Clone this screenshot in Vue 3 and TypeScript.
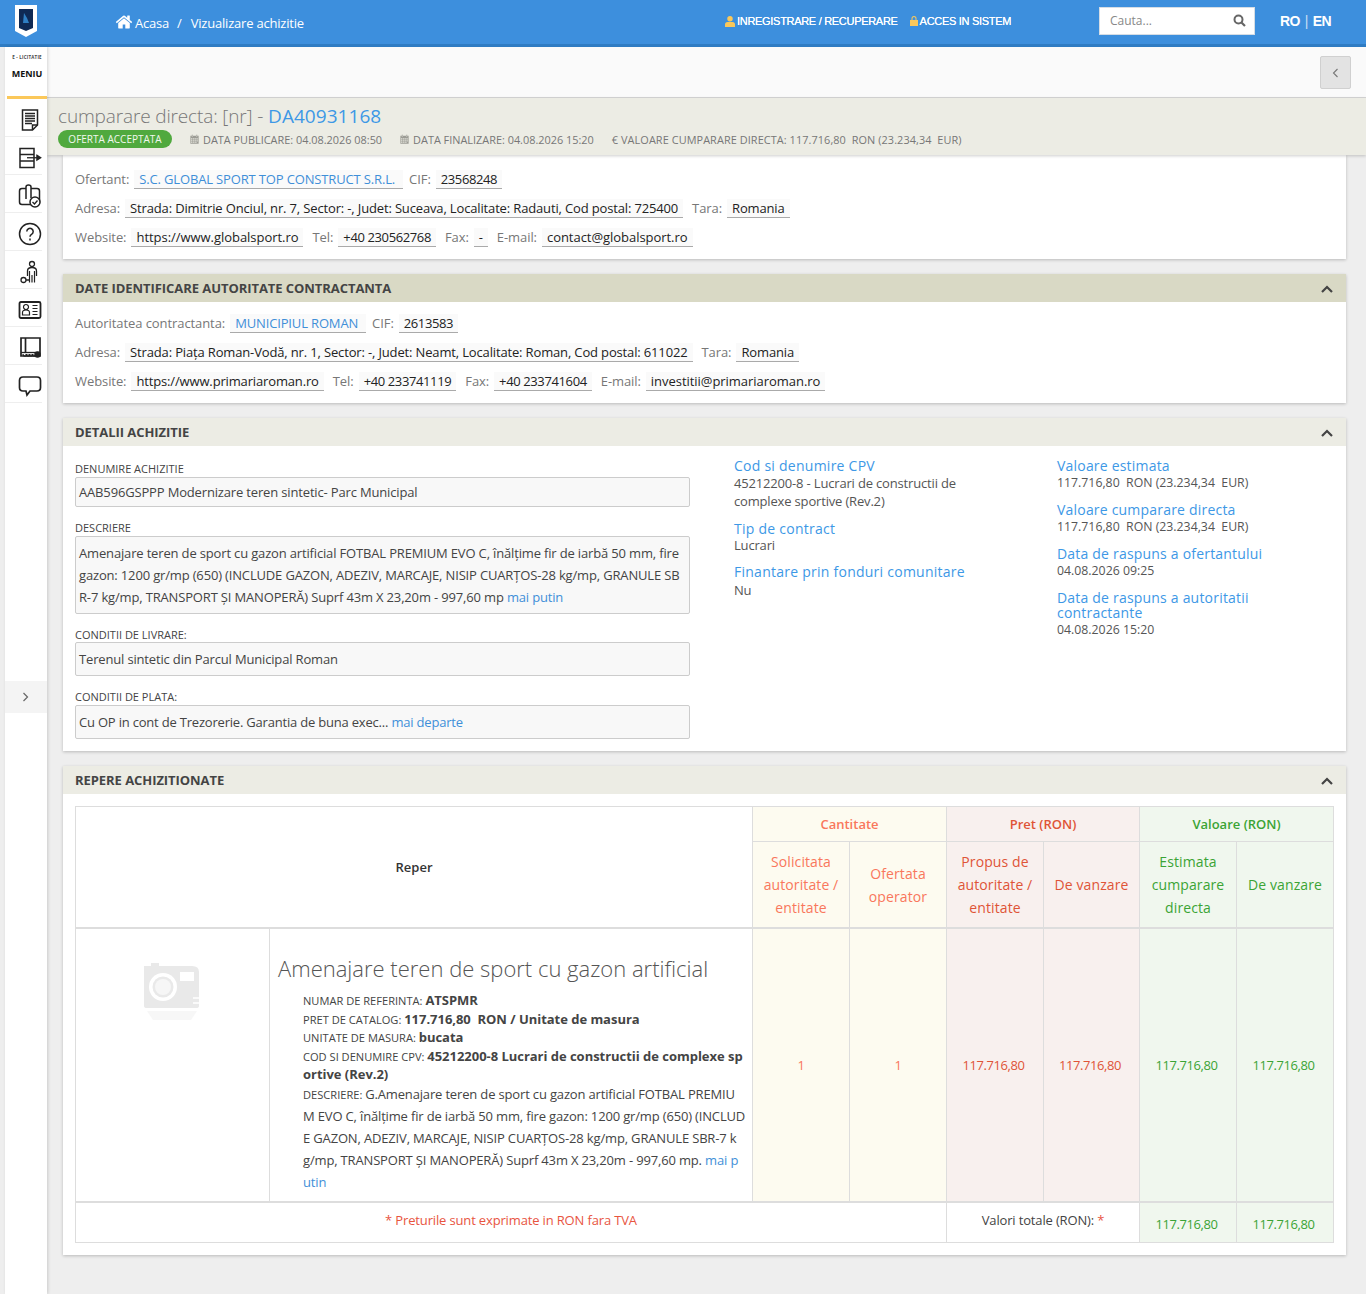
<script setup lang="ts">
interface Seg { d: string; fill?: string; w?: number }

const calendar = 'M2 2.500h12V14H2zM3 6v2h2V6zM6 6v2h2V6zM9 6v2h2V6zM12 6v2h1V6zM3 9v2h2V9zM6 9v2h2V9zM9 9v2h2V9zM12 9v2h1V9zM3 12v1h2v-1zM6 12v1h2v-1zM9 12v1h2v-1zM4 1h1.500v2.500H4zM10.500 1H12v2.500h-1.500z'
const home = 'M1472 992v480q0 26-19 45t-45 19h-384v-384h-256v384h-384q-26 0-45-19t-19-45v-480q0-1 .5-3t.5-3l575-474 575 474q1 2 1 6zm223-69l-62 74q-8 9-21 11h-3q-13 0-21-7l-692-577-692 577q-12 8-24 7-13-2-21-11l-62-74q-8-10-7-23.500t11-21.500l719-599q32-26 76-26t76 26l244 204v-195q0-14 9-23t23-9h192q14 0 23 9t9 23v408l219 182q10 8 11 21.500t-7 23.500z'
const navIcons: Seg[][] = [
  [
    { d: 'M4.500 2H19.500V17L14.500 22H4.500Z' },
    { d: 'M7 5.500h10M7 8h10M7 10.500h10M7 13h10M7 15.500h7', w: 1.3 },
    { d: 'M14.500 22v-5h5' }
  ],
  [
    { d: 'M2 2.500h14v6H2zM2 8.500h14V15H2zM2 15h14v6.500H2z' },
    { d: 'M9 11.750h10', w: 1.300 },
    { d: 'M19 9.500l3.500 2.250-3.500 2.250z', fill: '#222' }
  ],
  [
    { d: 'M4 4.500h15q2.500 0 2.500 2.500v11q0 2.500-2.500 2.500H4q-2.500 0-2.500-2.500V7Q1.500 4.500 4 4.500z' },
    { d: 'M8 15V3q0-2 2.500-2t2.500 2v11', fill: '#fff' },
    { d: 'M12 18a5 5 0 1 0 10 0a5 5 0 1 0-10 0', fill: '#fff' },
    { d: 'M14.500 18l2 2 3-3.500', w: 1.300 }
  ],
  [
    { d: 'M1.500 12a10.500 10.500 0 1 0 21 0a10.500 10.500 0 1 0-21 0' },
    { d: 'M8.800 9.500a3.200 3.200 0 1 1 4.800 2.800c-1 .6-1.600 1.200-1.600 2.400M12 16.500v2' }
  ],
  [
    { d: 'M14 1.500a2.500 2.500 0 1 1 0 5a2.500 2.500 0 1 1 0-5z', w: 1.300 },
    { d: 'M9.500 16V11q0-3.500 4.500-3.500t4.500 3.500v5', w: 1.300 },
    { d: 'M11.500 11v11.500M16.500 11v11.500M14 15v7.500', w: 1.200 },
    { d: 'M3 20a2.500 2.500 0 1 0 5 0a2.500 2.500 0 1 0-5 0M8 20h3', w: 1.300 }
  ],
  [
    { d: 'M3 4h18q1.500 0 1.500 1.500v13q0 1.500-1.500 1.500H3q-1.500 0-1.500-1.500v-13Q1.500 4 3 4z', w: 1.800 },
    { d: 'M4.500 17v-2.500q0-2.500 3.500-2.500t3.500 2.500V17zM8 6.500a2.500 2.500 0 1 1 0 5a2.500 2.500 0 1 1 0-5zM14.500 7.500h5M14.500 10.500h5M14.500 13.500h5M14.500 16.500h5', w: 1.200 }
  ],
  [
    { d: 'M3 2h19v18H3zM7.500 2v14', w: 1.700 },
    { d: 'M3 16.500h19', w: 1.300 },
    { d: 'M5 18a2 2.200 0 1 0 4 0M8 18a2 2.200 0 1 0 4 0M11 18a2 2.200 0 1 0 4 0M14 18a2 2.200 0 1 0 4 0', w: 1.200 },
    { d: 'M17 18.500a2.500 2.500 0 1 0 5 0a2.500 2.500 0 1 0-5 0', fill: '#222' }
  ],
  [
    { d: 'M5 3h14q3.500 0 3.500 3.500v7q0 3.500-3.500 3.500h-7l-3 4-1-4H5q-3.500 0-3.500-3.500v-7Q1.500 3 5 3z', w: 1.700 }
  ]
]
</script>

<template>
  <div class="page">
    <header class="topbar">
      <div class="logo">
        <svg width="22" height="32" viewBox="0 0 22 32">
          <path d="M0 0h22v26l-11 6L0 26z" fill="#fff" />
          <path d="M4 4h14v19l-7 3-7-3z" fill="#0f2a55" />
          <path d="M9 8l3 5 2 5H8z" fill="#2f7fc4" />
        </svg>
      </div>
      <nav class="crumbs">
        <svg class="home" width="18" height="18" viewBox="0 0 1792 1792"><path :d="home" fill="#fff" /></svg>
        <span>Acasa</span><span class="sep">/</span><span>Vizualizare achizitie</span>
      </nav>
      <div class="auth">
        <svg width="10" height="11" viewBox="0 0 10 11"><path d="M5 0a2.600 2.600 0 0 1 0 5.500A2.600 2.600 0 0 1 5 0zM0 11V8.500Q0 6 2.500 6h5Q10 6 10 8.500V11z" fill="#fbc85a" /></svg>
        <span class="auth-t">INREGISTRARE / RECUPERARE</span>
        <svg class="lock" width="8" height="10" viewBox="0 0 8 10"><path d="M0 4h8v6H0zM1.500 4V2.500a2.500 2.500 0 0 1 5 0V4h-1V2.500a1.500 1.500 0 0 0-3 0V4z" fill="#fbc85a" /></svg>
        <span class="auth-t">ACCES IN SISTEM</span>
      </div>
      <div class="search">
        <span>Cauta...</span>
        <svg width="13" height="13" viewBox="0 0 13 13"><circle cx="5.500" cy="5.500" r="4" fill="none" stroke="#666" stroke-width="2" /><path d="M8.500 8.500L12 12" stroke="#666" stroke-width="2.200" /></svg>
      </div>
      <div class="lang"><b>RO</b><i>|</i><b>EN</b></div>
    </header>

    <div class="shell">
      <aside class="side">
        <div class="brand">
          <div class="brand-s">E - LICITATIE</div>
          <div class="brand-m">MENIU</div>
        </div>
        <div v-for="(segs, i) in navIcons" :key="i" class="nav-item">
          <svg width="24" height="24" viewBox="0 0 24 24">
            <path v-for="(s, j) in segs" :key="j" :d="s.d" :fill="s.fill || 'none'" stroke="#222" :stroke-width="s.w || 1.500" />
          </svg>
        </div>
        <div class="side-toggle">
          <svg width="7" height="10" viewBox="0 0 7 10"><path d="M1.500 1l4 4-4 4" fill="none" stroke="#666" stroke-width="1.200" /></svg>
        </div>
      </aside>

      <main class="main">
        <div class="toolbar">
          <button class="back" type="button">
            <svg width="7" height="10" viewBox="0 0 7 10"><path d="M5.500 1l-4 4 4 4" fill="none" stroke="#777" stroke-width="1.100" /></svg>
          </button>
        </div>
        <div class="band">
          <h1><span class="h1t">cumparare directa: [nr] - </span><a>DA40931168</a></h1>
          <div class="meta">
            <span class="badge">OFERTA ACCEPTATA</span>
            <span class="m m1"><svg width="11" height="11" viewBox="0 0 16 16"><path :d="calendar" fill="#9c9c95" fill-rule="evenodd" /></svg>DATA PUBLICARE: 04.08.2026 08:50</span>
            <span class="m m2"><svg width="11" height="11" viewBox="0 0 16 16"><path :d="calendar" fill="#9c9c95" fill-rule="evenodd" /></svg>DATA FINALIZARE: 04.08.2026 15:20</span>
            <span class="m m3">€ VALOARE CUMPARARE DIRECTA: 117.716,80&nbsp; RON (23.234,34&nbsp; EUR)</span>
          </div>
        </div>

        <div class="content">
          <section class="card first">
            <div class="fields">
              <div class="row"><label>Ofertant:</label><span class="val link">S.C. GLOBAL SPORT TOP CONSTRUCT S.R.L.</span><label>CIF:</label><span class="val dig">23568248</span></div>
              <div class="row"><label>Adresa:</label><span class="val">Strada: Dimitrie Onciul, nr. 7, Sector: -, Judet: Suceava, Localitate: Radauti, Cod postal: 725400</span><label>Tara:</label><span class="val">Romania</span></div>
              <div class="row"><label>Website:</label><span class="val web">https://www.globalsport.ro</span><label>Tel:</label><span class="val dig">+40 230562768</span><label>Fax:</label><span class="val">-</span><label>E-mail:</label><span class="val web">contact@globalsport.ro</span></div>
            </div>
          </section>

          <section class="card">
            <div class="chead dark"><h2>DATE IDENTIFICARE AUTORITATE CONTRACTANTA</h2><svg width="14" height="9" viewBox="0 0 14 9"><path d="M2 7l5-5 5 5" fill="none" stroke="#444" stroke-width="2.200" /></svg></div>
            <div class="fields">
              <div class="row"><label>Autoritatea contractanta:</label><span class="val link">MUNICIPIUL ROMAN</span><label>CIF:</label><span class="val dig">2613583</span></div>
              <div class="row"><label>Adresa:</label><span class="val">Strada: Piața Roman-Vodă, nr. 1, Sector: -, Judet: Neamt, Localitate: Roman, Cod postal: 611022</span><label>Tara:</label><span class="val">Romania</span></div>
              <div class="row"><label>Website:</label><span class="val">https://www.primariaroman.ro</span><label>Tel:</label><span class="val dig">+40 233741119</span><label>Fax:</label><span class="val dig">+40 233741604</span><label>E-mail:</label><span class="val web">investitii@primariaroman.ro</span></div>
            </div>
          </section>

          <section class="card">
            <div class="chead"><h2>DETALII ACHIZITIE</h2><svg width="14" height="9" viewBox="0 0 14 9"><path d="M2 7l5-5 5 5" fill="none" stroke="#444" stroke-width="2.200" /></svg></div>
            <div class="details">
              <div class="col-a">
                <div class="lbl">DENUMIRE ACHIZITIE</div>
                <div class="box">AAB596GSPPP Modernizare teren sintetic- Parc Municipal</div>
                <div class="lbl">DESCRIERE</div>
                <div class="box long">Amenajare teren de sport cu gazon artificial FOTBAL PREMIUM EVO C, înălțime fir de iarbă 50 mm, fire gazon: 1200 gr/mp (650) (INCLUDE GAZON, ADEZIV, MARCAJE, NISIP CUARȚOS-28 kg/mp, GRANULE SBR-7 kg/mp, TRANSPORT ȘI MANOPERĂ) Suprf 43m X 23,20m - 997,60 mp <a>mai putin</a></div>
                <div class="lbl l3">CONDITII DE LIVRARE:</div>
                <div class="box tall">Terenul sintetic din Parcul Municipal Roman</div>
                <div class="lbl">CONDITII DE PLATA:</div>
                <div class="box tall pay">Cu OP in cont de Trezorerie. Garantia de buna exec... <a>mai departe</a></div>
              </div>
              <div class="col-b">
                <h3>Cod si denumire CPV</h3>
                <p class="p-first">45212200-8 - Lucrari de constructii de complexe sportive (Rev.2)</p>
                <h3>Tip de contract</h3>
                <p>Lucrari</p>
                <h3 class="h-last">Finantare prin fonduri comunitare</h3>
                <p>Nu</p>
              </div>
              <div class="col-c">
                <h3>Valoare estimata</h3>
                <p>117.716,80&nbsp; RON (23.234,34&nbsp; EUR)</p>
                <h3>Valoare cumparare directa</h3>
                <p>117.716,80&nbsp; RON (23.234,34&nbsp; EUR)</p>
                <h3>Data de raspuns a ofertantului</h3>
                <p>04.08.2026 09:25</p>
                <h3>Data de raspuns a autoritatii contractante</h3>
                <p>04.08.2026 15:20</p>
              </div>
            </div>
          </section>

          <section class="card last">
            <div class="chead"><h2>REPERE ACHIZITIONATE</h2><svg width="14" height="9" viewBox="0 0 14 9"><path d="M2 7l5-5 5 5" fill="none" stroke="#444" stroke-width="2.200" /></svg></div>
            <div class="tablewrap">
              <table>
                <colgroup>
                  <col class="c-img" /><col class="c-info" /><col class="c-n" /><col class="c-n" /><col class="c-n" /><col class="c-m" /><col class="c-n" /><col class="c-n" />
                </colgroup>
                <thead>
                  <tr class="r1">
                    <th colspan="2" rowspan="2" class="reper">Reper</th>
                    <th colspan="2" class="y">Cantitate</th>
                    <th colspan="2" class="p">Pret (RON)</th>
                    <th colspan="2" class="g">Valoare (RON)</th>
                  </tr>
                  <tr class="r2">
                    <td class="y">Solicitata autoritate / entitate</td>
                    <td class="y">Ofertata operator</td>
                    <td class="p">Propus de autoritate / entitate</td>
                    <td class="p">De vanzare</td>
                    <td class="g">Estimata cumparare directa</td>
                    <td class="g">De vanzare</td>
                  </tr>
                </thead>
                <tbody>
                  <tr class="body">
                    <td class="img">
                      <svg width="58" height="62" viewBox="0 0 58 62">
                        <path d="M1 6h7V3h8v3h33q7 0 7 6v34q0 2-3 2H4q-3 0-3-2z" fill="#e9e9e9" />
                        <circle cx="20" cy="27" r="14" fill="#fff" />
                        <circle cx="20" cy="27" r="10.500" fill="#e9e9e9" />
                        <circle cx="20" cy="27" r="8" fill="#f6f6f6" />
                        <rect x="37" y="12" width="14" height="9" fill="#fff" />
                        <path d="M50 38h7M50 43h7" stroke="#fff" stroke-width="1.500" />
                        <path d="M4 51h50l-6 9H10z" fill="#f7f7f7" />
                      </svg>
                    </td>
                    <td class="info">
                      <h4>Amenajare teren de sport cu gazon artificial</h4>
                      <div class="spec">
                        <div><small>NUMAR DE REFERINTA: </small><b>ATSPMR</b></div>
                        <div><small>PRET DE CATALOG: </small><b>117.716,80&nbsp; RON / Unitate de masura</b></div>
                        <div><small>UNITATE DE MASURA: </small><b>bucata</b></div>
                        <div class="brk"><small>COD SI DENUMIRE CPV: </small><b>45212200-8 Lucrari de constructii de complexe sportive (Rev.2)</b></div>
                        <div class="desc"><small>DESCRIERE: </small>G.Amenajare teren de sport cu gazon artificial FOTBAL PREMIU<br />M EVO C, înălțime fir de iarbă 50 mm, fire gazon: 1200 gr/mp (650) (INCLUD<br />E GAZON, ADEZIV, MARCAJE, NISIP CUARȚOS-28 kg/mp, GRANULE SBR-7 k<br />g/mp, TRANSPORT ȘI MANOPERĂ) Suprf 43m X 23,20m - 997,60 mp. <a>mai p<br />utin</a></div>
                      </div>
                    </td>
                    <td class="y num">1</td>
                    <td class="y num">1</td>
                    <td class="p num money">117.716,80</td>
                    <td class="p num money">117.716,80</td>
                    <td class="g num money">117.716,80</td>
                    <td class="g num money">117.716,80</td>
                  </tr>
                </tbody>
                <tfoot>
                  <tr class="foot">
                    <td colspan="4" class="note">* Preturile sunt exprimate in RON fara TVA</td>
                    <td colspan="2" class="tot">Valori totale (RON): <em>*</em></td>
                    <td class="g sum money">117.716,80</td>
                    <td class="g sum money">117.716,80</td>
                  </tr>
                </tfoot>
              </table>
            </div>
          </section>
        </div>
      </main>
    </div>
  </div>
</template>

<style>
html, body { margin: 0; background: #eee; }
</style>

<style scoped>
.page { font-family: "Open Sans", sans-serif; font-size: 13px; color: #444; background: #eee; height: 1294px; overflow: hidden; }
a { color: #3f8fd8; }

.topbar { height: 44px; padding-top: 0; background: #3d8fdd; border-bottom: 3px solid #2f7cc3; display: flex; align-items: center; color: #fff; }
.logo { margin-left: 15px; width: 22px; height: 32px; margin-top: -3px; }
.crumbs { margin-left: 78px; width: 610px; display: flex; align-items: center; font-size: 13px; margin-top: 2px; letter-spacing: -.2px; }
.home { margin-right: 2px; margin-top: -2px; }
.sep { margin: 0 9px 0 8px; }
.auth { width: 374px; display: flex; align-items: center; margin-top: -2px; font-family: "Liberation Sans", sans-serif; font-size: 11px; letter-spacing: -0.3px; text-shadow: 0 0 .4px #fff; }
.auth-t { margin-left: 2px; }
.lock { margin-left: 12px; }
.search { width: 154px; height: 26px; background: #fff; border: 1px solid #d5dde5; display: flex; align-items: center; justify-content: space-between; box-sizing: content-box; color: #888; font-size: 12px; margin-top: -3px; }
.search span { margin-left: 10px; }
.search svg { margin-right: 8px; }
.lang { margin-left: 25px; margin-top: -3px; font-family: "Liberation Sans", sans-serif; font-size: 14px; display: flex; gap: 5px; letter-spacing: -0.6px; }
.lang i { font-style: normal; opacity: .7; }

.shell { display: flex; align-items: stretch; height: 1247px; }
.side { width: 42px; margin-left: 5px; background: #fff; box-shadow: 1px 0 3px rgba(0,0,0,.15); position: relative; z-index: 2; flex: none; }
.brand { padding-bottom: 1px; margin-left: 2px; border-bottom: 3px solid #fbc85a; text-align: center; color: #111; box-sizing: content-box; height: 48px; }
.brand-s { font-size: 4.500px; font-weight: 700; padding-top: 7px; line-height: 6px; color: #444; letter-spacing: .2px; }
.brand-m { font-size: 9px; font-weight: 700; line-height: 12px; margin-top: 8px; }
.nav-item { height: 37px; border-bottom: 1px solid #eee; display: flex; align-items: center; justify-content: center; margin-right: 5px; padding-left: 12px; padding-top: 0; box-sizing: content-box; }
.nav-item svg { position: relative; top: 2px; }
.side-toggle { margin-top: 278px; height: 32px; background: #f4f4f4; display: flex; align-items: center; justify-content: center; padding-right: 1px; }

.main { flex: 1; min-width: 0; }
.toolbar { height: 50px; background: #fafafa; border-bottom: 1px solid #d6d6d6; display: flex; align-items: center; justify-content: flex-end; padding-right: 15px; box-shadow: 0 1px 2px rgba(0,0,0,.1); position: relative; }
.back { width: 31px; height: 33px; background: #e3e3e3; border: 1px solid #d0d0d0; border-radius: 2px; display: flex; align-items: center; justify-content: center; padding: 0; margin-top: 1px; }
.band { height: 57px; background: #ecece4; padding-left: 11px; box-sizing: border-box; box-shadow: 0 1px 3px rgba(0,0,0,.2); position: relative; z-index: 1; }
h1 { margin: 0; font-size: 19px; font-weight: 300; line-height: 27px; padding-top: 5px; color: #777; }
.h1t { letter-spacing: -.14px; }
h1 a { color: #3d98e6; font-weight: 400; letter-spacing: .05px; }
.meta { display: flex; align-items: center; height: 18px; margin-top: 0; font-size: 10.900px; color: #777; }
.badge { width: 114px; height: 18px; border-radius: 9px; background: #50a93e; color: #f2f8ee; font-size: 10px; line-height: 18px; text-align: center; flex: none; }
.m { white-space: nowrap; }
.m svg { margin-right: 3px; vertical-align: -1px; }
.m1 { margin-left: 17px; }
.m2 { margin-left: 17px; }
.m3 { margin-left: 18px; letter-spacing: .08px; }

.content { padding: 0 20px 0 16px; }
.card { background: #fff; box-shadow: 0 1px 3px rgba(0,0,0,.22); margin-bottom: 15px; }
.first { height: 104px; }
.chead { height: 28px; background: #ecece4; display: flex; align-items: center; justify-content: space-between; padding: 0 12px; }
.chead.dark { background: #d9d9c5; }
.chead svg { margin-top: 3px; }
h2 { margin: 0; font-size: 13px; font-weight: 700; color: #444; letter-spacing: -.06px; }
.fields { padding: 12px 12px 0; height: 89px; box-sizing: content-box; }
.first .fields { padding-top: 15px; height: auto; }
.row { display: flex; align-items: baseline; height: 19px; margin-bottom: 10px; white-space: nowrap; }
.row label { color: #777; margin-right: 5px; letter-spacing: -.08px; }
.val { background: #fafafa; border-bottom: 1px solid #aaa; padding: 0 5px; line-height: 18px; color: #222; margin-right: 9px; letter-spacing: -.15px; }
.val.web { letter-spacing: -.04px; }
.val.dig { letter-spacing: -.38px; }
.val.link { color: #3f8fd8; padding: 0 8px 0 5px; margin-right: 6px; }

.details { display: flex; padding: 10px 12px 12px; height: 283px; }
.col-a { width: 615px; flex: none; }
.lbl { font-size: 11px; line-height: 16px; color: #444; margin-top: 13px; }
.lbl.l3 { line-height: 15px; }
.col-a .lbl:first-child { margin-top: 5px; }
.box { background: #f8f8f8; border: 1px solid #ccc; border-radius: 2px; padding: 0 3px; line-height: 28px; height: 28px; color: #444; overflow: hidden; letter-spacing: -.16px; }
.box.long { word-break: break-all; line-height: 22px; height: auto; padding: 5px 3px 5px; }
.box.tall { height: 32px; line-height: 32px; }
.box.pay { letter-spacing: -.2px; }
.col-b { margin-left: 44px; width: 283px; flex: none; }
.col-c { margin-left: 40px; width: 270px; flex: none; }
h3 { margin: 0; font-size: 14px; line-height: 15px; font-weight: 400; color: #3d98e6; letter-spacing: .25px; }
.col-b h3, .col-c h3 { padding-top: 2px; }
.col-c h3 { letter-spacing: .2px; }
.col-b p { margin: 0 0 9px; max-width: 260px; font-size: 13px; line-height: 18px; color: #555; letter-spacing: -.17px; }
.col-b .p-first { margin-top: 1px; }
.col-b .h-last { margin: -1px 0 2px; }
.col-c p { margin: 2px 0 9px; font-size: 12.300px; line-height: 16px; color: #555; }

.last { margin-bottom: 0; height: 489px; }
.tablewrap { padding: 12px 12px 0; }
table { border-collapse: collapse; table-layout: fixed; width: 1258px; }
.c-img { width: 194px; }
.c-info { width: 483px; }
.c-n { width: 97px; }
.c-m { width: 96px; }
th, td { border: 1px solid #ddd; padding: 0; text-align: center; vertical-align: middle; font-weight: 400; }
th { font-weight: 600; font-size: 13px; }
.r1 th { height: 34px; }
.reper { color: #333; }
.r2 td { height: 85px; padding: 0 6px; font-size: 14px; line-height: 23px; letter-spacing: .1px; }
thead { border-bottom: 2px solid #ddd; }
tfoot { border-top: 2px solid #ddd; }
.y { background: #fdfbf0; color: #f9775c; }
.p { background: #f8f0ee; color: #df5437; }
.g { background: #f0f7ee; color: #3ba435; }
.body { height: 274px; }
.img { vertical-align: top; padding: 31px 1px 0 0; }
.info { text-align: left; vertical-align: top; padding: 24px 3px 0 8px; }
h4 { margin: 0; font-size: 22px; font-weight: 300; line-height: 30px; color: #555; }
.spec { margin: 8px 0 0 25px; color: #444; line-height: 18.500px; }
.spec small { font-size: 11.100px; line-height: 1; }
.spec b { font-weight: 700; letter-spacing: -.03px; }
.brk { word-break: break-all; padding-right: 3px; }
.desc { line-height: 22px; letter-spacing: -.16px; margin-top: -1px; }
.desc small { letter-spacing: 0; }
.num { font-size: 13px; letter-spacing: -.4px; }
.money { padding-right: 3px; }
.foot { height: 40px; }
.note { color: #e8553f; padding-bottom: 4px; letter-spacing: -.15px; }
.tot { color: #444; padding-bottom: 4px; letter-spacing: -.15px; }
.tot em { font-style: normal; color: #e8553f; }
.sum { padding-top: 3px; letter-spacing: -.4px; }
</style>
